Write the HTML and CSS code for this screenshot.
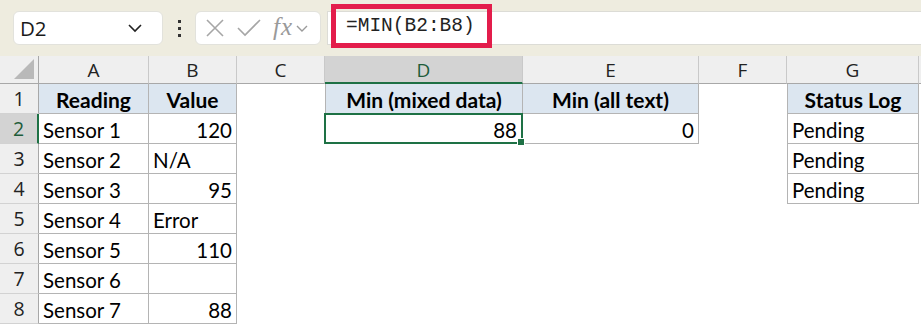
FILE: index.html
```html
<!DOCTYPE html>
<html>
<head>
<meta charset="utf-8">
<link rel="stylesheet" href="styles.css">
</head>
<body>
<div class="toolbar">
  <div class="namebox">
    <span class="name">D2</span>
    <svg class="chev" width="16" height="10" viewBox="0 0 16 10"><path d="M2 2 L8 8 L14 2" fill="none" stroke="#222" stroke-width="1.6"/></svg>
  </div>
  <div class="dots"><i></i><i></i><i></i></div>
  <div class="fxbox">
    <svg class="ico" width="22" height="22" viewBox="0 0 22 22"><path d="M3 3 L19 19 M19 3 L3 19" stroke="#a6a6a6" stroke-width="1.6" fill="none"/></svg>
    <svg class="ico" width="26" height="22" viewBox="0 0 26 22"><path d="M2 11 L9 18 L24 3" stroke="#a6a6a6" stroke-width="1.6" fill="none"/></svg>
    <span class="fx">fx</span>
    <svg class="chev2" width="14" height="10" viewBox="0 0 14 10"><path d="M2 3 L7 8 L12 3" fill="none" stroke="#9a9a9a" stroke-width="1.4"/></svg>
  </div>
  <div class="formula">
    <div class="hl">=MIN(B2:B8)</div>
  </div>
</div>
<div class="sheet">
  <div class="ch corner"><span class="tri"></span></div>
  <div class="ch">A</div>
  <div class="ch">B</div>
  <div class="ch">C</div>
  <div class="ch sel">D</div>
  <div class="ch">E</div>
  <div class="ch">F</div>
  <div class="ch">G</div>
  <div class="ch last"></div>

  <div class="rh">1</div>
  <div class="c t th">Reading</div>
  <div class="c t th">Value</div>
  <div class="c"></div>
  <div class="c t th bl">Min (mixed data)</div>
  <div class="c t th">Min (all text)</div>
  <div class="c"></div>
  <div class="c t th bl">Status Log</div>
  <div class="c"></div>

  <div class="rh rsel">2</div>
  <div class="c t">Sensor 1</div>
  <div class="c t r">120</div>
  <div class="c"></div>
  <div class="c t r bl active">88<span class="handle"></span></div>
  <div class="c t r">0</div>
  <div class="c"></div>
  <div class="c t bl">Pending</div>
  <div class="c"></div>

  <div class="rh">3</div>
  <div class="c t">Sensor 2</div>
  <div class="c t">N/A</div>
  <div class="c"></div>
  <div class="c"></div>
  <div class="c"></div>
  <div class="c"></div>
  <div class="c t bl">Pending</div>
  <div class="c"></div>

  <div class="rh">4</div>
  <div class="c t">Sensor 3</div>
  <div class="c t r">95</div>
  <div class="c"></div>
  <div class="c"></div>
  <div class="c"></div>
  <div class="c"></div>
  <div class="c t bl">Pending</div>
  <div class="c"></div>

  <div class="rh">5</div>
  <div class="c t">Sensor 4</div>
  <div class="c t">Error</div>
  <div class="c"></div><div class="c"></div><div class="c"></div><div class="c"></div><div class="c"></div><div class="c"></div>

  <div class="rh">6</div>
  <div class="c t">Sensor 5</div>
  <div class="c t r">110</div>
  <div class="c"></div><div class="c"></div><div class="c"></div><div class="c"></div><div class="c"></div><div class="c"></div>

  <div class="rh">7</div>
  <div class="c t">Sensor 6</div>
  <div class="c t r"></div>
  <div class="c"></div><div class="c"></div><div class="c"></div><div class="c"></div><div class="c"></div><div class="c"></div>

  <div class="rh">8</div>
  <div class="c t">Sensor 7</div>
  <div class="c t r">88</div>
  <div class="c"></div><div class="c"></div><div class="c"></div><div class="c"></div><div class="c"></div><div class="c"></div>
</div>
</body>
</html>
```
FILE: styles.css
```css
* { box-sizing: border-box; }
html, body { margin: 0; padding: 0; background: #fff; overflow: hidden; }
body { width: 921px; height: 326px; font-family: "Lato", "Carlito", sans-serif; }

.toolbar {
  height: 56px;
  background: #eeecdf;
  display: flex;
  align-items: center;
  padding-left: 13px;
  position: relative;
}
.namebox {
  width: 150px;
  height: 34px;
  background: #fff;
  border: 1px solid #e2e2dc;
  border-radius: 6px;
  display: flex;
  align-items: center;
  justify-content: space-between;
  padding: 0 19px 0 6px;
}
.name { font-family: "Open Sans", sans-serif; font-size: 20.5px; color: #1a1a1a; }
.dots { width: 32px; display: flex; flex-direction: column; align-items: center; gap: 4px; }
.dots i { display: block; width: 3px; height: 3px; background: #333; }
.fxbox {
  width: 126px;
  height: 34px;
  background: #fff;
  border: 1px solid #e2e2dc;
  border-radius: 6px;
  display: flex;
  align-items: center;
  padding-left: 8px;
  gap: 10px;
}
.fx {
  font-family: "Liberation Serif", serif;
  font-style: italic;
  font-size: 25px;
  color: #9a9a9a;
  margin-left: 1px;
  letter-spacing: 1px;
  line-height: 1;
  margin-top: -3px;
}
.chev2 { margin-left: -8px; }
.formula {
  margin-left: 6px;
  flex: 1;
  height: 34px;
  background: #fff;
  border-top: 1px solid #dcdcd6;
  border-bottom: 1px solid #dcdcd6;
  border-left: 1px solid #dcdcd6;
  position: relative;
}
.hl {
  position: absolute;
  left: 3px;
  top: -8px;
  width: 161px;
  height: 44px;
  border: 5px solid #e31d4b;
  font-family: "Liberation Mono", "DejaVu Sans Mono", monospace;
  font-size: 19.5px;
  color: #222;
  padding-left: 10px;
  line-height: 34px;
}

.sheet {
  display: grid;
  grid-template-columns: 39px 110px 88px 88px 198px 176px 88px 132px 1fr;
  grid-template-rows: 28px repeat(8, 30px);
}
.ch {
  background: #efefef;
  border-right: 1px solid #c9c9c9;
  border-bottom: 1px solid #a8a8a8;
  font-family: "Open Sans", sans-serif;
  font-size: 19px;
  color: #222;
  display: flex;
  align-items: center;
  justify-content: center;
  padding-top: 1px;
}
.ch.sel { background: #d3d3d3; border-bottom: 2px solid #1e7145; color: #1e5c3a; }
.ch.last { border-right: none; }
.corner { position: relative; border-right: 1px solid #a8a8a8; }
.tri {
  position: absolute;
  right: 4px;
  bottom: 4px;
  width: 0; height: 0;
  border-left: 20px solid transparent;
  border-bottom: 20px solid #b9b9b9;
}
.rh {
  background: #efefef;
  border-right: 1px solid #a8a8a8;
  border-bottom: 1px solid #d2d2d2;
  font-family: "Open Sans", sans-serif;
  font-size: 19.5px;
  color: #222;
  display: flex;
  align-items: center;
  justify-content: center;
}
.rh.rsel { background: #d3d3d3; border-right: 2px solid #1e7145; color: #1e5c3a; }
.c {
  font-size: 20.5px;
  color: #000;
  display: flex;
  align-items: center;
  padding: 2px 4px 0 4px;
  white-space: nowrap;
}
.t { border-right: 1px solid #b4b4b4; border-bottom: 1px solid #b4b4b4; }
.bl { border-left: 1px solid #b4b4b4; }
.th { background: #dce6f0; font-weight: bold; font-size: 21px; justify-content: center; }
.r { justify-content: flex-end; }
.active { position: relative; border: 2px solid #1e7145; margin: -1px 0 0 -1px; }
.handle {
  position: absolute;
  right: -4px;
  bottom: -4px;
  width: 6px;
  height: 6px;
  background: #1e7145;
  border: 1px solid #fff;
  box-sizing: content-box;
}
```
